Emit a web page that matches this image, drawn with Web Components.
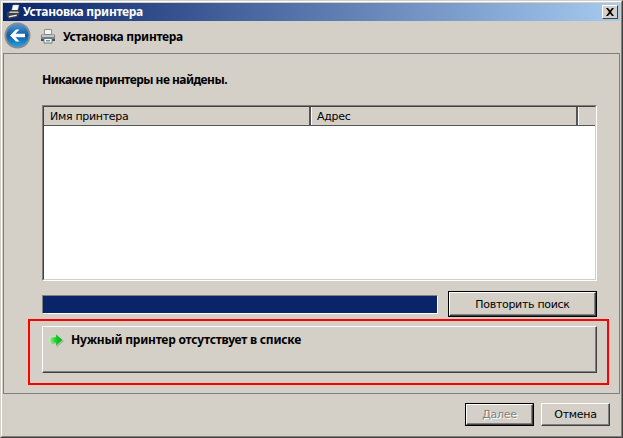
<!DOCTYPE html>
<html>
<head>
<meta charset="utf-8">
<title>Установка принтера</title>
<style>
  html, body { margin: 0; padding: 0; background: #d4d0c8; }
  body { font-family: "DejaVu Sans", sans-serif; font-size: 11px; }
</style>
</head>
<body>
<template id="printer-glyph">
  <svg width="16" height="16" viewBox="0 0 16 16">
    <path d="M4.500 1.500h7v5h-7z" fill="#f6f6f6" stroke="#8a8f94"/>
    <path d="M1 6.500h14v6.500H1z" fill="#7b8187"/>
    <path d="M2 7h12v2H2z" fill="#c0c4c8"/>
    <path d="M1 11h14v2H1z" fill="#4a4f55"/>
    <path d="M4 10.500h8v4.500H4z" fill="#fff" stroke="#777"/>
    <path d="M6 12h4v1.500H6z" fill="#2fb5a5"/>
  </svg>
</template>

<win-frame>
  <title-bar>Установка принтера</title-bar>
  <wizard-header>Установка принтера</wizard-header>
  <wizard-page>
    <page-heading>Никакие принтеры не найдены.</page-heading>
    <printer-list></printer-list>
    <search-row></search-row>
    <red-mark><command-link>Нужный принтер отсутствует в списке</command-link></red-mark>
  </wizard-page>
  <wizard-footer></wizard-footer>
</win-frame>

<script>
// общий базовый класс: разметка и стили в открытом shadow root
class Base extends HTMLElement {
  constructor() {
    super();
    this.attachShadow({ mode: "open" });
    this.shadowRoot.innerHTML = `<style>${this.constructor.css}</style>${this.constructor.html}`;
  }
}

const BOLD = `font: bold 12px "Noto Sans", sans-serif;`;
const REGULAR = `font: 11px "DejaVu Sans", sans-serif; letter-spacing: -0.3px;`;

const printerIcon = () => document.getElementById("printer-glyph").innerHTML;

class WinFrame extends Base {
  static css = `
    :host {
      display: flex; flex-direction: column; box-sizing: border-box;
      width: 623px; height: 438px; background: #d4d0c8; color: #000;
      border-top: 1px solid #d4d0c8; border-left: 1px solid #d4d0c8;
      border-right: 1px solid #404040; border-bottom: 1px solid #404040;
    }
    .inner {
      display: flex; flex-direction: column; flex: 1; min-height: 0;
      border-top: 1px solid #fff; border-left: 1px solid #fff;
      border-right: 1px solid #808080; border-bottom: 1px solid #808080;
      padding: 1px 0 0 1px;
    }`;
  static html = `<div class="inner"><slot></slot></div>`;
}

class TitleBar extends Base {
  static css = `
    :host {
      display: flex; align-items: center; height: 18px; flex: none; margin-right: 1px;
      background: linear-gradient(90deg, #0a246a, #a6caf0);
      color: #fff; ${BOLD} letter-spacing: -0.3px;
    }
    .icon { display: flex; margin: 0 2px 0 2px; }
    .text { flex: 1; white-space: nowrap; padding-bottom: 2px; }
    .close {
      box-sizing: border-box; width: 16px; height: 14px; margin-right: 2px;
      background: #d4d0c8; display: flex; align-items: center; justify-content: center;
      border: 1px solid; border-color: #fff #404040 #404040 #fff;
    }`;
  static html = `<span class="icon"><svg width="16" height="16" viewBox="0 0 16 16">
        <path d="M8 1h6l-1.500 6H6.500z" fill="#fff" stroke="#9aa0a6" stroke-width=".5"/>
        <path d="M2 8l4-2h8l1 3-2 4-9 2-2-3z" fill="#3a3f46"/>
        <path d="M5 7.500h8l1 1.500H4z" fill="#c4c8cc"/>
        <path d="M4 12l8-1.500-.5 1.500-8 1.500z" fill="#e8e8e8"/>
      </svg></span>
      <span class="text"><slot></slot></span>
      <span class="close"><svg width="8" height="8" viewBox="0 0 8 8"><path d="M0 0h2l2 2.500L6 0h2L5 4l3 4H6L4 5.500 2 8H0l3-4z" fill="#000"/></svg></span>`;
}

class WizardHeader extends Base {
  static css = `
    :host {
      display: flex; align-items: center; box-sizing: border-box; height: 32px; flex: none;
      padding-bottom: 2px; ${BOLD} letter-spacing: -0.3px;
    }
    .back { display: flex; margin: -2px 0 0 1px; }
    .icon { display: flex; margin: 0 7px 0 9px; }`;
  static get html() {
    return `<span class="back"><svg width="27" height="27" viewBox="0 0 27 27">
        <defs>
          <linearGradient id="g" x1="0" y1="0" x2="0" y2="1">
            <stop offset="0" stop-color="#4a94d2"/><stop offset=".5" stop-color="#0d5ca6"/><stop offset="1" stop-color="#22a0e0"/>
          </linearGradient>
        </defs>
        <circle cx="13.500" cy="13.500" r="13" fill="#7f8c96"/>
        <circle cx="13.500" cy="13.500" r="11" fill="url(#g)"/>
        <path d="M6 13.500l6-6h3.500l-4 4.200H21v3.600h-9.500l4 4.200H12z" fill="#fff"/>
      </svg></span>
      <span class="icon">${printerIcon()}</span>
      <slot></slot>`;
  }
}

class WizardPage extends Base {
  static css = `
    :host {
      display: flex; flex-direction: column; box-sizing: border-box;
      height: 341px; flex: none; margin-right: 1px;
      border: 1px solid #808080; padding: 0 11px 0 24px;
    }`;
  static html = `<slot></slot>`;
}

class PageHeading extends Base {
  static css = `
    :host {
      display: block; height: 51px; padding: 17px 0 0 14px; box-sizing: border-box;
      ${BOLD} letter-spacing: -0.53px;
    }`;
  static html = `<slot></slot>`;
}

class PrinterList extends Base {
  static css = `
    :host {
      display: block; box-sizing: border-box;
      width: 555px; height: 176px; margin-left: 14px;
      border: 1px solid; border-color: #808080 #fff #fff #808080;
      ${REGULAR}
    }
    .well {
      box-sizing: border-box; height: 100%; background: #fff;
      border: 1px solid; border-color: #404040 #d4d0c8 #d4d0c8 #404040;
    }
    .head { display: flex; height: 18px; background: #d4d0c8; border-bottom: 1px solid #555; }
    .col { display: flex; align-items: center; padding: 1px 0 0 5px; box-sizing: border-box; border-right: 2px solid #555; }
    .name { width: 267px; padding-left: 6px; }
    .addr { width: 267px; border-left: 1px solid #fff; }
    .rest { flex: 1; border-left: 1px solid #fff; }`;
  static html = `<div class="well"><div class="head">
      <span class="col name">Имя принтера</span>
      <span class="col addr">Адрес</span>
      <span class="rest"></span>
    </div></div>`;
}

class ClassicButton extends Base {
  static css = `
    :host { display: inline-flex; box-sizing: border-box; ${REGULAR} }
    :host([default]) { border: 1px solid #000; }
    button {
      flex: 1; margin: 0; padding: 0; font: inherit; letter-spacing: inherit; color: #000; background: #d4d0c8;
      border: 1px solid; border-color: #fff #404040 #404040 #fff;
      box-shadow: inset -1px -1px 0 #808080;
    }
    button:disabled { color: #808080; text-shadow: 1px 1px 0 #fff; }`;
  static html = `<button><slot></slot></button>`;
  connectedCallback() {
    this.shadowRoot.querySelector("button").disabled = this.hasAttribute("disabled");
  }
}

class SearchRow extends Base {
  static css = `
    :host { display: flex; align-items: center; margin: 10px 0 0 14px; width: 555px; height: 26px; justify-content: space-between; }
    .bar {
      box-sizing: border-box; width: 396px; height: 19px; background: #0a246a;
      border: 1px solid; border-color: #808080 #fff #fff #808080;
    }
    classic-button { width: 149px; height: 26px; }`;
  static html = `<div class="bar"></div><classic-button default>Повторить поиск</classic-button>`;
}

class RedMark extends Base {
  static css = `
    :host {
      display: block; box-sizing: border-box; width: 581px; height: 66px; margin-top: 2px;
      border: 2px solid #f00; padding: 5px 0 0 12px;
    }`;
  static html = `<slot></slot>`;
}

class CommandLink extends Base {
  static css = `
    :host {
      display: flex; box-sizing: border-box; width: 555px; height: 47px;
      border: 1px solid; border-color: #fff #404040 #404040 #fff;
      box-shadow: inset -1px -1px 0 #808080;
      padding: 5px 0 0 6px; ${BOLD} letter-spacing: -0.23px;
    }
    svg { flex: none; margin-right: 7px; }
    span { margin-top: -1px; }`;
  static html = `<svg width="15" height="15" viewBox="0 0 15 15">
      <defs>
        <linearGradient id="a" x1="0" y1="0" x2="1" y2="0">
          <stop offset="0" stop-color="#8be98a"/><stop offset=".45" stop-color="#1fcb2a"/><stop offset="1" stop-color="#0ea81c"/>
        </linearGradient>
      </defs>
      <path d="M7.500 2.500L15 9l-7.500 6.500V12H2V6h5.500z" fill="#a9a69f"/>
      <path d="M6.500 1.500L14 8l-7.500 6.500V11H1V5h5.500z" fill="url(#a)" stroke="#e6f7e2" stroke-width=".5"/>
    </svg><span><slot></slot></span>`;
}

class WizardFooter extends Base {
  static css = `
    :host { display: flex; flex: 1; justify-content: flex-end; align-items: flex-start; gap: 7px; padding: 9px 11px 0 0; }
    classic-button { width: 69px; height: 23px; }`;
  static html = `<classic-button default disabled>Далее</classic-button><classic-button>Отмена</classic-button>`;
}

customElements.define("win-frame", WinFrame);
customElements.define("title-bar", TitleBar);
customElements.define("wizard-header", WizardHeader);
customElements.define("wizard-page", WizardPage);
customElements.define("page-heading", PageHeading);
customElements.define("printer-list", PrinterList);
customElements.define("classic-button", ClassicButton);
customElements.define("search-row", SearchRow);
customElements.define("red-mark", RedMark);
customElements.define("command-link", CommandLink);
customElements.define("wizard-footer", WizardFooter);
</script>
</body>
</html>
